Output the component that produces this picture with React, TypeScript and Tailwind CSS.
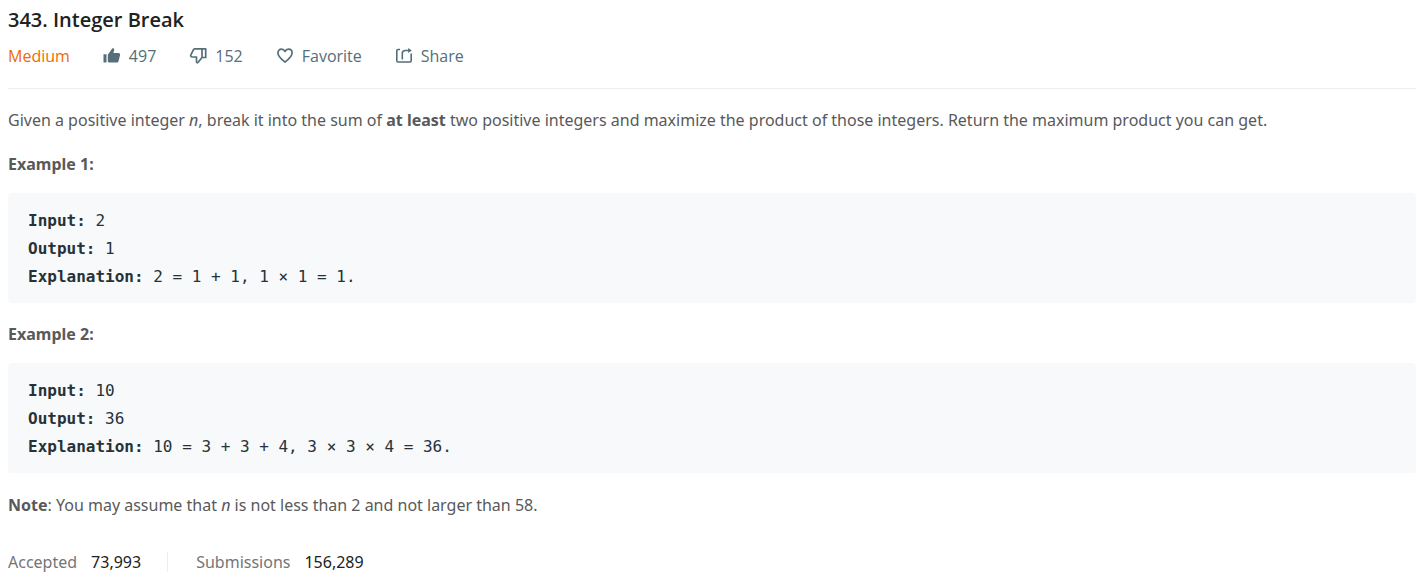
import type { ReactNode } from 'react';

function LikeIcon() {
  return (
    <svg viewBox="0 0 18 18" className="size-[18px]" fill="currentColor" aria-hidden="true">
      <path d="M.5 7.200h3V15.500h-3zM4.800 7.700 9.200 1.600c.4-.6 1.200-.5 1.600 0 .5.600.5 1.300.3 2L10.400 6H15.500c1.100 0 1.800.8 1.600 1.900l-1.500 6c-.3 1-.9 1.600-1.900 1.600H6.300c-.9 0-1.500-.6-1.500-1.500z" />
    </svg>
  );
}

function DislikeIcon() {
  return (
    <svg viewBox="0 0 18 18" className="size-[18px]" fill="none" stroke="currentColor" strokeWidth="1.700" strokeLinejoin="round" aria-hidden="true">
      <path d="M13 1.800H6c-.7 0-1.200.3-1.500.9L1.900 7.800c-.5 1.200.1 2.200 1.300 2.200h4.300v4.600c0 1.300.9 1.600 1.700.7L13 10.500zM13 1.800h3.700v8.700H13z" />
    </svg>
  );
}

function HeartIcon() {
  return (
    <svg viewBox="0 0 18 18" className="size-[18px]" fill="none" stroke="currentColor" strokeWidth="1.700" strokeLinejoin="round" aria-hidden="true">
      <path d="M9 15C5.500 12.200 1.900 9.500 1.900 5.900c0-2.200 1.500-3.700 3.500-3.700C7 2.200 8.300 3 9 4.500c.7-1.500 2-2.300 3.600-2.300 2 0 3.500 1.500 3.500 3.700 0 3.600-3.600 6.300-7.100 9.100z" />
    </svg>
  );
}

function ShareIcon() {
  return (
    <svg viewBox="0 0 18 18" className="size-[18px]" fill="none" stroke="currentColor" strokeWidth="1.600" strokeLinejoin="round" aria-hidden="true">
      <path d="M5 2.500H3c-.8 0-1.200.4-1.200 1.200v10.100c0 .8.4 1.200 1.200 1.200h12c.8 0 1.200-.4 1.200-1.200V6.500M7.300 12.500V6.400c0-1.900 1-2.900 2.900-2.900h4.500" />
      <path d="M13.200.9 16.800 3.500 13.200 6.100z" fill="currentColor" stroke="none" />
    </svg>
  );
}

function Action({ icon, children, label }: { icon: ReactNode; children: ReactNode; label?: string }) {
  return (
    <button type="button" aria-label={label} className="flex items-center gap-2 text-[#546e7a]">
      {icon}
      <span>{children}</span>
    </button>
  );
}

function Example({ title, input, output, explanation }: { title: string; input: string; output: string; explanation: string }) {
  return (
    <section className="mb-[19px]">
      <h2 className="font-bold">{title}</h2>
      <pre className="mt-[17px] overflow-x-auto rounded-[4px] bg-[#f7f9fa] px-5 pt-[14px] pb-3 font-['DejaVu_Sans_Mono',monospace] leading-7 text-[#263238]">
        <strong>Input: </strong>{input}{'\n'}
        <strong>Output: </strong>{output}{'\n'}
        <strong>Explanation: </strong>{explanation}
      </pre>
    </section>
  );
}

export default function App() {
  return (
    <main className="bg-white pt-2 pr-px pb-2 pl-2 font-['Noto_Sans','Open_Sans',sans-serif] text-[16px] leading-6 text-[#595959]">
      <h1 className="font-['Open_Sans',sans-serif] text-xl leading-6 font-semibold text-[#212121]">343. Integer Break</h1>
      <div className="mt-3 flex flex-wrap items-center gap-x-[33px] border-b border-[#eeeeee] pb-5 font-['Open_Sans',sans-serif]">
        <span className="text-[#ef6c00]">Medium</span>
        <Action icon={<LikeIcon />} label="Like 497">497</Action>
        <Action icon={<DislikeIcon />} label="Dislike 152">152</Action>
        <Action icon={<HeartIcon />}>Favorite</Action>
        <Action icon={<ShareIcon />}>Share</Action>
      </div>
      <p className="mt-[19px] mb-5">
        Given a positive integer <em>n</em>, break it into the sum of <strong>at least</strong> two positive integers and maximize the product of those integers. Return the maximum product you can get.
      </p>
      <Example title="Example 1:" input="2" output="1" explanation="2 = 1 + 1, 1 × 1 = 1." />
      <Example title="Example 2:" input="10" output="36" explanation="10 = 3 + 3 + 4, 3 × 3 × 4 = 36." />
      <p className="mt-5">
        <strong>Note</strong>: You may assume that <em>n</em> is not less than 2 and not larger than 58.
      </p>
      <dl className="mt-[33px] flex flex-wrap items-center">
        <div className="flex gap-[14px]">
          <dt className="text-[#757575]">Accepted</dt>
          <dd className="text-[#212121]">73,993</dd>
        </div>
        <div className="ml-[26px] flex h-5 items-center gap-[14px] border-l border-[#eeeeee] pl-7">
          <dt className="text-[#757575]">Submissions</dt>
          <dd className="text-[#212121]">156,289</dd>
        </div>
      </dl>
    </main>
  );
}
